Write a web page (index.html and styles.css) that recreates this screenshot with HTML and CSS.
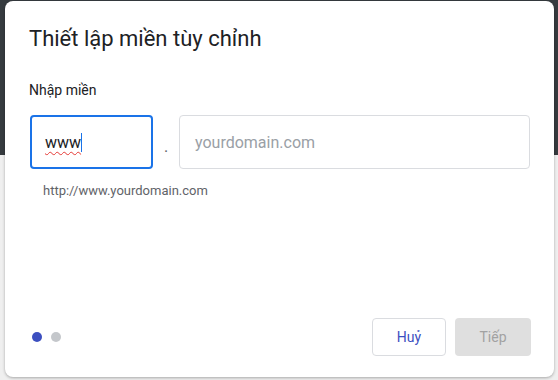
FILE: index.html
```html
<!DOCTYPE html>
<html lang="vi">

<head>
    <meta charset="UTF-8">
    <meta name="viewport" content="width=device-width, initial-scale=1.0">
    <title>Thiết lập miền tùy chỉnh</title>
    <link rel="stylesheet" href="styles.css">
</head>

<body>
    <div class="dialog">
        <h2 class="title">Thiết lập miền tùy chỉnh</h2>
        <p class="label">Nhập miền</p>
        <div class="domainRow">
            <div class="field active">
                <span class="typed">www</span><span class="caret"></span>
            </div>
            <span class="sep">.</span>
            <div class="field wide">
                <span class="placeholder">yourdomain.com</span>
            </div>
        </div>
        <p class="hint">http://www.yourdomain.com</p>
        <div class="footer">
            <div class="steps">
                <span class="step current"></span>
                <span class="step"></span>
            </div>
            <div class="actions">
                <button class="btn cancel">Huỷ</button>
                <button class="btn next" disabled>Tiếp</button>
            </div>
        </div>
    </div>
</body>

</html>
```

FILE: styles.css
```css
body {
    margin: 0;
    height: 380px;
    background: linear-gradient(#363b3f 0, #363b3f 155px, #efefef 155px);
    font-family: Roboto, "Noto Sans", sans-serif;
    color: #202124;
}

.dialog {
    box-sizing: border-box;
    width: 549px;
    height: 376px;
    margin: 1px 4px 0 5px;
    padding: 23px 23px 21px 24px;
    background: #fff;
    border-radius: 8px;
    box-shadow: 0 1px 3px rgba(0, 0, 0, 0.3);
    display: flex;
    flex-direction: column;
}

.title {
    margin: 0;
    font-size: 22px;
    font-weight: 400;
    line-height: 30px;
}

.label {
    margin: 26px 0 0;
    font-size: 14px;
    line-height: 20px;
}

.domainRow {
    display: flex;
    align-items: center;
    margin-top: 15px;
    padding-left: 1px;
}

.field {
    box-sizing: border-box;
    height: 54px;
    border: 1px solid #dadce0;
    border-radius: 4px;
    display: flex;
    align-items: center;
    padding-left: 15px;
    font-size: 16px;
}

.field.active {
    width: 123px;
    border: 2px solid #1a73e8;
    padding-left: 13px;
}

.field.wide {
    width: 351px;
}

.typed {
    text-decoration: underline wavy #e53935;
    text-decoration-thickness: 1px;
    text-underline-offset: 3px;
}

.caret {
    width: 1px;
    height: 19px;
    background: #1a73e8;
}

.placeholder {
    color: #9aa0a6;
}

.sep {
    width: 26px;
    text-align: center;
    font-size: 16px;
    color: #5f6368;
    padding-top: 8px;
}

.hint {
    margin: 13px 0 0 14px;
    font-size: 13px;
    line-height: 18px;
    color: #5f6368;
}

.footer {
    margin-top: auto;
    display: flex;
    justify-content: space-between;
    align-items: center;
}

.steps {
    display: flex;
    gap: 9px;
    padding-left: 3px;
}

.step {
    width: 10px;
    height: 10px;
    border-radius: 50%;
    background: #c4c7cb;
}

.step.current {
    background: #3c4fc0;
}

.actions {
    display: flex;
    gap: 9px;
}

.btn {
    box-sizing: border-box;
    height: 38px;
    border-radius: 4px;
    font-family: Roboto, "Noto Sans", sans-serif;
    font-size: 14px;
    font-weight: 400;
}

.cancel {
    width: 74px;
    background: #fff;
    border: 1px solid #dadce0;
    color: #3c4fc0;
}

.next {
    width: 76px;
    background: #dfdfdf;
    border: none;
    color: #a2a2a2;
}
```
